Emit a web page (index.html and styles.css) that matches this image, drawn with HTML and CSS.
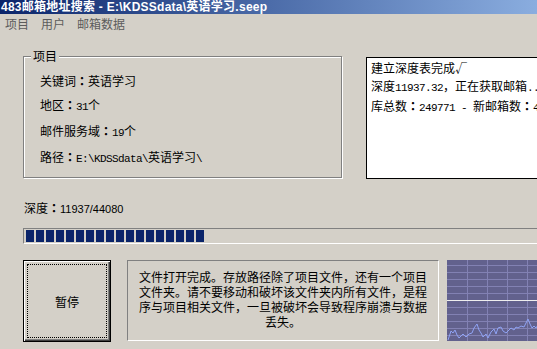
FILE: index.html
```html
<!DOCTYPE html>
<html>
<head>
<meta charset="utf-8" />
<title>483邮箱地址搜索</title>
<link rel="stylesheet" href="styles.css">
</head>
<body>
<div class="window">
    <div class="titlebar">483邮箱地址搜索 - E:\KDSSdata\英语学习.seep</div>
    <div class="menubar">
        <span>项目</span>
        <span>用户</span>
        <span>邮箱数据</span>
    </div>
    <div class="content">
        <div class="top-row">
            <div class="group">
                <span class="legend">项目</span>
                <div class="field">关键词<span class="colon">：</span>英语学习</div>
                <div class="field">地区<span class="colon">：</span><span class="mono">31</span>个</div>
                <div class="field">邮件服务域<span class="colon">：</span><span class="mono">19</span>个</div>
                <div class="field">路径<span class="colon">：</span><span class="mono">E:\KDSSdata\</span>英语学习<span class="mono">\</span></div>
            </div>
            <div class="log">
                <div>建立深度表完成√</div>
                <div>深度<span class="mono">11937.32</span>，正在获取邮箱<span class="mono">....</span></div>
                <div>库总数<span class="colon">：</span><span class="mono">249771 - </span>新邮箱数<span class="colon">：</span><span class="mono">4</span></div>
            </div>
        </div>
        <div class="depth">深度<span class="colon">：</span><span class="digits">11937/44080</span></div>
        <div class="progress">
            <i></i><i></i><i></i><i></i><i></i><i></i><i></i><i></i><i></i>
            <i></i><i></i><i></i><i></i><i></i><i></i><i></i><i></i><i></i>
        </div>
        <div class="bottom-row">
            <div class="button"><div class="focus">暂停</div></div>
            <div class="message">文件打开完成。存放路径除了项目文件，还有一个项目文件夹。请不要移动和破坏该文件夹内所有文件，是程序与项目相关文件，一旦被破坏会导致程序崩溃与数据丢失。</div>
            <div class="graph">
                <svg width="91" height="81" viewBox="0 0 91 81">
                    <rect width="91" height="81" fill="#62618d"/>
                    <g stroke="#8281b3" stroke-width="1">
                        <line x1="20.5" y1="0" x2="20.5" y2="81"/>
                        <line x1="40.5" y1="0" x2="40.5" y2="81"/>
                        <line x1="60.5" y1="0" x2="60.5" y2="81"/>
                        <line x1="80.5" y1="0" x2="80.5" y2="81"/>
                        <line x1="0" y1="5.5" x2="91" y2="5.5"/>
                        <line x1="0" y1="12.5" x2="91" y2="12.5"/>
                        <line x1="0" y1="19.5" x2="91" y2="19.5"/>
                        <line x1="0" y1="26.5" x2="91" y2="26.5"/>
                        <line x1="0" y1="33.5" x2="91" y2="33.5"/>
                        <line x1="0" y1="47.5" x2="91" y2="47.5"/>
                        <line x1="0" y1="54.5" x2="91" y2="54.5"/>
                        <line x1="0" y1="61.5" x2="91" y2="61.5"/>
                        <line x1="0" y1="68.5" x2="91" y2="68.5"/>
                        <line x1="0" y1="75.5" x2="91" y2="75.5"/>
                    </g>
                    <line x1="0" y1="40.5" x2="91" y2="40.5" stroke="#eeeeee" stroke-width="1"/>
                    <polyline fill="none" stroke="#8fa3f5" stroke-width="1"
                        points="1,80 4,71 6,73 8,70 10,75 12,78 16,74 19,77 22,74 25,73 27,68 30,64 32,70 34,73 36,77 39,74 41,78 44,72 47,69 49,74 51,68 54,67 56,71 59,73 61,71 64,68 67,70 69,67 71,68 74,66 77,67 79,63 81,59 83,64 85,68 87,66 89,68 91,65"/>
                </svg>
            </div>
        </div>
    </div>
</div>
</body>
</html>
```
FILE: styles.css
```css
body {margin:0; background:#d4d0c8; font-family:"Noto Sans CJK SC", sans-serif; font-size:12px; color:#000;}
.window {width:537px; height:349px; overflow:hidden;}

.titlebar {height:14px; line-height:14px; padding-left:1px; color:#fff; font-weight:bold; font-size:12px; letter-spacing:0.25px; font-family:"Liberation Sans", "Noto Sans CJK SC", sans-serif; white-space:nowrap;
    background:linear-gradient(to right, #0a246a 0, #4c6ca9 270px, #8aaddf 537px);}
.menubar {height:20px; line-height:20px; display:flex; gap:12px; padding-left:5px; color:#5c5c5c;}

.content {padding-left:23px;}
.top-row {display:flex; align-items:flex-start; gap:24px; margin-top:22px;}

.group {position:relative; box-sizing:border-box; width:319px; height:122px; flex:none; padding:12px 0 0 16px;
    border:1px solid #808080; box-shadow:1px 1px 0 #fff, inset 1px 1px 0 #fff;}
.legend {position:absolute; left:7px; top:-8px; padding:0 2px; line-height:14px; background:#d4d0c8;}
.field {line-height:24px; white-space:nowrap;}

.colon {font-family:"Noto Sans CJK TC", sans-serif; font-weight:bold;}
.mono {font-family:"Liberation Mono", monospace; font-size:11px; letter-spacing:-0.6px;}
.digits {font-family:"Liberation Sans", sans-serif; font-size:11px;}

.log {box-sizing:border-box; width:260px; height:122px; flex:none; margin-top:1px; padding:1px 4px; background:#fff; border:1px solid #000; line-height:18px; white-space:nowrap; overflow:hidden;}

.depth {margin-top:22px; padding-left:1px; line-height:14px;}

.progress {box-sizing:border-box; width:600px; height:16px; margin-top:12px; padding:1px; display:flex; gap:2px;
    border-top:1px solid #808080; border-left:1px solid #808080; border-bottom:1px solid #fff;}
.progress i {display:block; width:8px; height:12px; background:#0a246a;}
.progress i:first-child {margin-left:1px;}

.bottom-row {display:flex; align-items:flex-start; margin-top:16px;}
.button {box-sizing:border-box; width:88px; height:82px; flex:none; display:flex; border:1px solid #000;
    box-shadow:inset 1px 1px 0 #fff, inset -1px -1px 0 #404040, inset -2px -2px 0 #808080;}
.focus {flex:1; margin:3px; border:1px dotted #000; display:flex; align-items:center; justify-content:center;}

.message {box-sizing:border-box; width:312px; height:81px; flex:none; margin-left:16px; padding:8px 10px 0; text-align:center; line-height:15px;
    border-top:1px solid #808080; border-left:1px solid #808080; border-bottom:1px solid #fff; border-right:1px solid #fff;}
.graph {margin-left:8px; height:81px;}
.graph svg {display:block;}
```
